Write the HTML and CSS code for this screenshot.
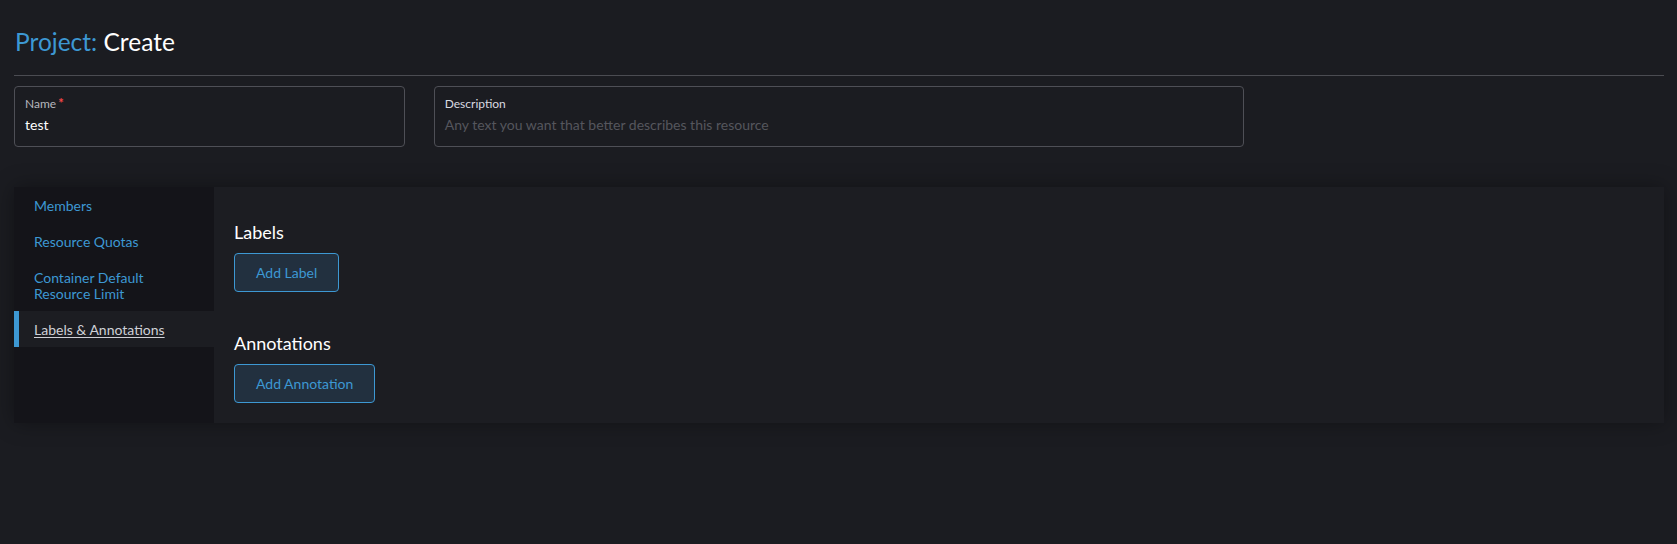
FILE: index.html
```html
<!DOCTYPE html>
<html lang="en">
<head>
<meta charset="utf-8">
<title>Project: Create</title>
<link rel="stylesheet" href="styles.css">
</head>
<body>
<main class="page">
  <header class="page-header">
    <h1 class="title"><span class="title-type">Project:</span> <span class="title-action">Create</span></h1>
  </header>

  <div class="row">
    <div class="field span-3">
      <label class="field-label">Name<span class="required">*</span></label>
      <div class="field-value">test</div>
    </div>
    <div class="field span-6">
      <label class="field-label field-label-light">Description</label>
      <div class="field-value placeholder">Any text you want that better describes this resource</div>
    </div>
  </div>

  <section class="tabbed">
    <nav class="side-tabs">
      <a class="tab">Members</a>
      <a class="tab">Resource Quotas</a>
      <a class="tab">Container Default Resource Limit</a>
      <a class="tab active"><span class="tab-text">Labels &amp; Annotations</span></a>
    </nav>
    <div class="tab-content">
      <div class="group">
        <h3 class="group-title">Labels</h3>
        <button class="btn">Add Label</button>
      </div>
      <div class="group group-next">
        <h3 class="group-title">Annotations</h3>
        <button class="btn">Add Annotation</button>
      </div>
    </div>
  </section>
</main>
</body>
</html>
```

FILE: styles.css
```css
html, body {
  margin: 0;
  padding: 0;
  background: #1b1c21;
  color: #e6e6e6;
  font-family: Lato, "Open Sans", "Liberation Sans", sans-serif;
  height: 100%;
}

.page {
  padding: 0 13px 0 14px;
}

.page-header {
  padding-top: 27px;
  padding-bottom: 19px;
  border-bottom: 1px solid #4b4c52;
}

.title {
  margin: 0;
  font-size: 24.5px;
  font-weight: 400;
  line-height: 29px;
  padding-left: 1px;
}

.title-type {
  color: #3d98d3;
}

.title-action {
  color: #ffffff;
}

.row {
  display: flex;
  margin-top: 10px;
}

.field {
  box-sizing: border-box;
  height: 61px;
  border: 1px solid #4e4f56;
  border-radius: 4px;
  padding: 10px 10px 0;
  margin-right: 1.75%;
}

.span-3 { width: 23.6875%; }
.span-6 { width: 49.125%; }

.field-label {
  display: block;
  font-size: 12px;
  line-height: 14px;
  color: #b6b7be;
}

.field-label-light {
  color: #d9dae0;
}

.required {
  color: #f64747;
  margin-left: 2px;
  font-size: 13px;
  font-weight: 700;
  vertical-align: top;
  position: relative;
  top: -1px;
}

.field-value {
  margin-top: 5px;
  font-size: 14px;
  line-height: 17px;
  color: #ffffff;
}

.placeholder {
  color: #55565d;
}

.tabbed {
  display: flex;
  margin-top: 40px;
  background: #1c1d22;
  box-shadow: 0 0 20px rgba(0, 0, 0, 0.35);
}

.side-tabs {
  width: 200px;
  flex: none;
  background: #141419;
  display: flex;
  flex-direction: column;
}

.tab {
  display: block;
  padding: 11px 20px 9px;
  font-size: 14px;
  line-height: 16px;
  color: #3d98d3;
  text-decoration: none;
}

.tab.active {
  background: #1c1d22;
  color: #cfd0d6;
  box-shadow: inset 5px 0 0 #3d98d3;
}

.tab-text {
  text-decoration: underline;
  text-underline-offset: 2px;
}

.tab-content {
  flex: 1;
  padding: 34px 20px 20px;
}

.group-title {
  margin: 0 0 10px;
  font-size: 18px;
  font-weight: 400;
  line-height: 22px;
  color: #ffffff;
}

.group-next {
  margin-top: 40px;
}

.btn {
  display: block;
  height: 39px;
  padding: 0 21px;
  background: #22303f;
  border: 1px solid #3d98d3;
  border-radius: 4px;
  color: #3d98d3;
  font-family: Lato, "Open Sans", "Liberation Sans", sans-serif;
  font-size: 14px;
  line-height: 37px;
}
```
